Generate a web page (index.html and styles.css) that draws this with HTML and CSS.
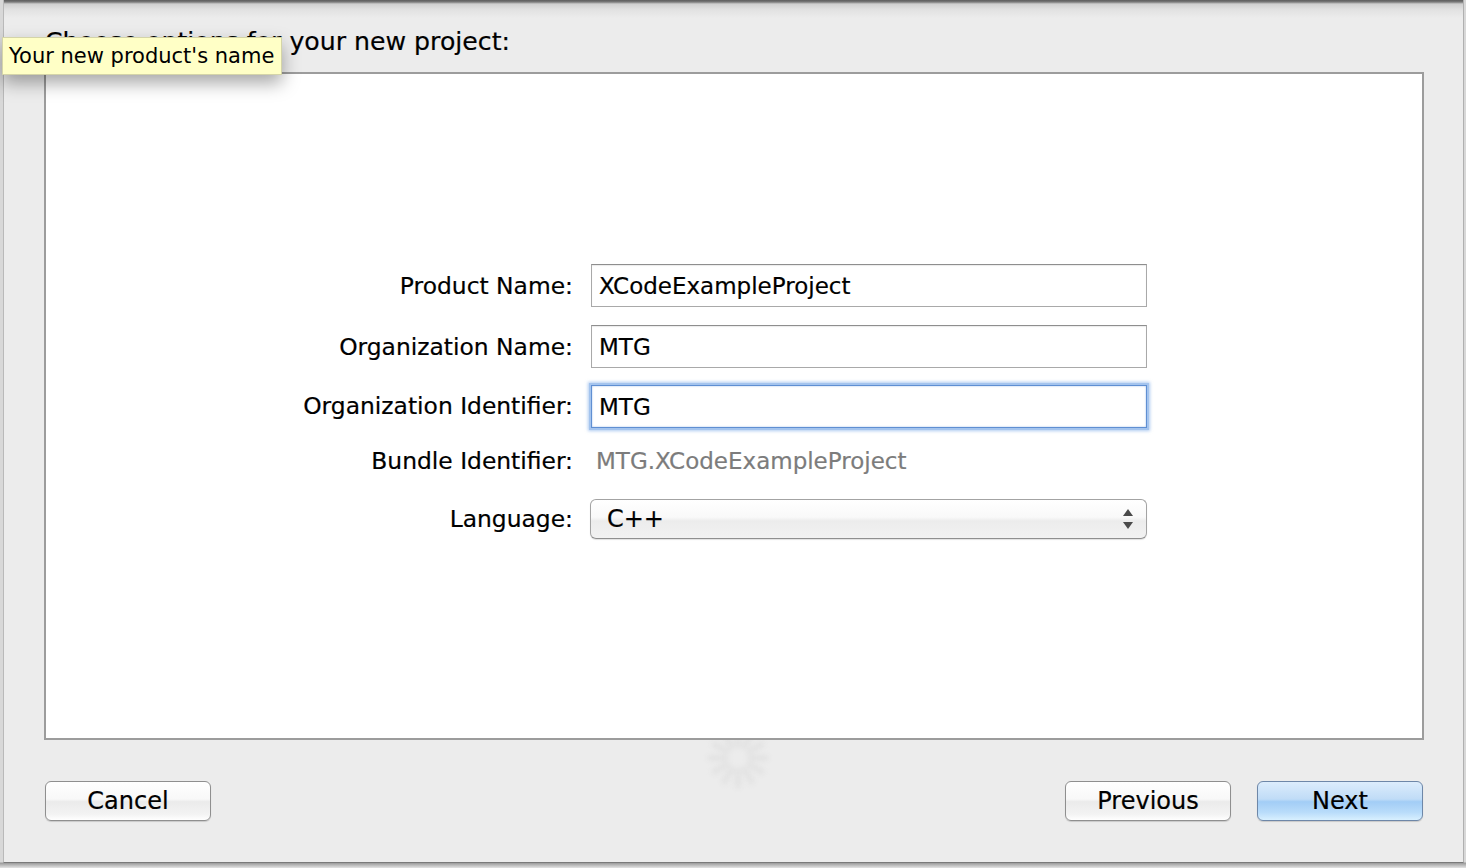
FILE: index.html
```html
<!DOCTYPE html>
<html>
<head>
<meta charset="utf-8">
<link rel="stylesheet" href="styles.css">
</head>
<body>
<div class="window">
  <div class="title">Choose options for your new project:</div>
  <div class="panel">
    <div class="form">
      <div class="label r1">Product Name:</div>
      <div class="field r1">XCodeExampleProject</div>
      <div class="label r2">Organization Name:</div>
      <div class="field r2">MTG</div>
      <div class="label r3">Organization Identifier:</div>
      <div class="field focused r3">MTG</div>
      <div class="label r4">Bundle Identifier:</div>
      <div class="static r4">MTG.XCodeExampleProject</div>
      <div class="label r5">Language:</div>
      <div class="popup r5">
        <span>C++</span>
        <svg class="arrows" width="12" height="24" viewBox="0 0 12 24"><path d="M6 2 L11 9 H1 Z" fill="#4a4a4a"/><path d="M6 22 L11 15 H1 Z" fill="#4a4a4a"/></svg>
      </div>
    </div>
  </div>
  <div class="footer">
    <button class="btn">Cancel</button>
    <svg class="spinner" width="80" height="80" viewBox="-40 -40 80 80">
      <g stroke="#d9d9d9" stroke-width="6" stroke-linecap="round" opacity="0.5">
        <line x1="0" y1="-13" x2="0" y2="-27" transform="rotate(0)"/>
        <line x1="0" y1="-13" x2="0" y2="-27" transform="rotate(30)"/>
        <line x1="0" y1="-13" x2="0" y2="-27" transform="rotate(60)"/>
        <line x1="0" y1="-13" x2="0" y2="-27" transform="rotate(90)"/>
        <line x1="0" y1="-13" x2="0" y2="-27" transform="rotate(120)"/>
        <line x1="0" y1="-13" x2="0" y2="-27" transform="rotate(150)"/>
        <line x1="0" y1="-13" x2="0" y2="-27" transform="rotate(180)"/>
        <line x1="0" y1="-13" x2="0" y2="-27" transform="rotate(210)"/>
        <line x1="0" y1="-13" x2="0" y2="-27" transform="rotate(240)"/>
        <line x1="0" y1="-13" x2="0" y2="-27" transform="rotate(270)"/>
        <line x1="0" y1="-13" x2="0" y2="-27" transform="rotate(300)"/>
        <line x1="0" y1="-13" x2="0" y2="-27" transform="rotate(330)"/>
      </g>
    </svg>
    <div class="right">
      <button class="btn">Previous</button>
      <button class="btn primary">Next</button>
    </div>
  </div>
  <div class="tooltip">Your new product's name</div>
</div>
</body>
</html>
```

FILE: styles.css
```css
html, body {
  margin: 0;
  padding: 0;
}
body {
  width: 1466px;
  height: 868px;
  overflow: hidden;
  background: linear-gradient(#d8d8d8, #d8d8d8 862px, #9a9a9a 863px, #e4e4e4 868px);
  font-family: "DejaVu Sans", "Liberation Sans", sans-serif;
  color: #000;
}
.window {
  position: relative;
  box-sizing: border-box;
  margin-left: 3px;
  width: 1461px;
  height: 863px;
  border-left: 1px solid #b9b9b9;
  border-right: 1px solid #b0b0b0;
  border-bottom: 1px solid #7a7a7a;
  background: linear-gradient(#5c5c5c 0px, #7a7a7a 2px, #cfcfcf 4px, #e2e2e2 10px, #ececec 18px, #ececec);
  padding: 27px 39px 0 40px;
  display: flex;
  flex-direction: column;
}
.title {
  font-size: 25.2px;
  line-height: 29px;
  height: 28px;
  margin-bottom: 17px;
  padding-left: 1px;
  -webkit-text-stroke: 0.2px #000;
}
.panel {
  box-sizing: border-box;
  height: 668px;
  background: #fff;
  border: 2px solid #9c9c9c;
  padding-top: 190px;
}
.form {
  display: grid;
  grid-template-columns: 527px 556px;
  grid-template-rows: 43px 18px 43px 16px 44px 13px 40px 18px 40px;
  column-gap: 18px;
  font-size: 23.4px;
  -webkit-text-stroke: 0.2px #000;
}
.label {
  text-align: right;
  display: flex;
  align-items: center;
  justify-content: flex-end;
  white-space: nowrap;
}
.r1 { grid-row: 1; }
.r2 { grid-row: 3; }
.r3 { grid-row: 5; }
.r4 { grid-row: 7; }
.r5 { grid-row: 9; }
.field {
  box-sizing: border-box;
  border: 1px solid #a9a9a9;
  border-top-color: #8e8e8e;
  box-shadow: inset 0 1px 1px rgba(0,0,0,0.08);
  padding-left: 7px;
  display: flex;
  align-items: center;
  background: #fff;
  font-size: 23px;
}
.field.focused {
  margin-top: 1px;
  border: 1px solid #5f8fd2;
  box-shadow: 0 0 0 2px #a4c4ee, 0 0 3px 3px rgba(110,160,230,0.55), inset 0 0 2px #9bbbe8;
}
.static {
  color: #7c7c7c;
  -webkit-text-stroke: 0.2px #7c7c7c;
  display: flex;
  align-items: center;
  padding-left: 5px;
  font-size: 23px;
}
.popup {
  box-sizing: border-box;
  margin-left: -1px;
  border: 1px solid #a3a3a3;
  border-bottom-color: #8f8f8f;
  border-radius: 6px;
  background: linear-gradient(#ffffff, #f9f9f9 45%, #ececec 55%, #f2f2f2);
  box-shadow: 0 1px 1px rgba(0,0,0,0.12);
  display: flex;
  align-items: center;
  justify-content: space-between;
  padding: 0 12px 0 16px;
  font-size: 24px;
}
.arrows {
  display: block;
}
.footer {
  position: relative;
  display: flex;
  justify-content: space-between;
  align-items: flex-start;
  padding-top: 41px;
  flex: 1;
  overflow: hidden;
}
.right {
  display: flex;
  gap: 26px;
  margin-right: 1px;
}
.btn {
  box-sizing: border-box;
  width: 166px;
  height: 40px;
  border: 1px solid #8f8f8f;
  border-radius: 6px;
  background: linear-gradient(#ffffff, #f8f8f8 45%, #ebebeb 52%, #f3f3f3 85%, #ffffff);
  box-shadow: 0 1px 1px rgba(0,0,0,0.15);
  font-family: "DejaVu Sans", "Liberation Sans", sans-serif;
  font-size: 24px;
  -webkit-text-stroke: 0.2px #000;
  color: #000;
  padding: 0;
  margin: 0 0 0 1px;
}
.right .btn {
  margin: 0;
}
.btn.primary {
  border-color: #6e87a8;
  background: linear-gradient(#dcecfc, #c0dcf7 45%, #a2cdf6 52%, #b9dcfa 80%, #d8f0ff);
}
.spinner {
  position: absolute;
  left: 654px;
  top: -22px;
  filter: blur(2.5px);
}
.tooltip {
  position: absolute;
  left: -2px;
  top: 37px;
  width: 280px;
  height: 38px;
  box-sizing: border-box;
  background: #ffffc6;
  border: 1px solid #d4d4a8;
  box-shadow: 0 8px 18px rgba(0,0,0,0.35);
  font-size: 21px;
  line-height: 36px;
  padding-left: 6px;
  white-space: nowrap;
}
```
